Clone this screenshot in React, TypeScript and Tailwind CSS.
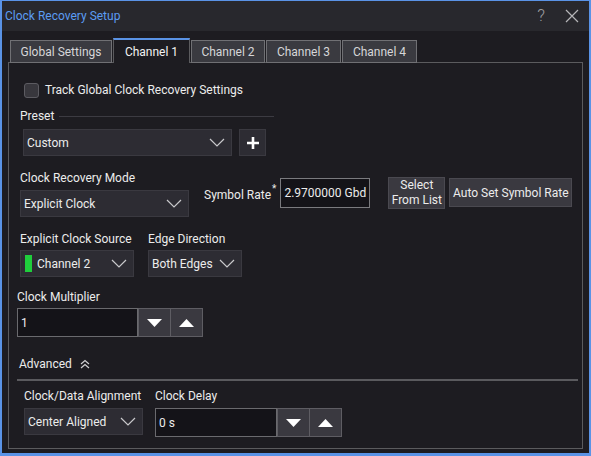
import React from "react";

const font = { fontFamily: "Roboto, 'Noto Sans', sans-serif" };

function Chevron() {
  return (
    <svg width="16" height="9" viewBox="0 0 16 9" className="shrink-0">
      <polyline points="1,1 8,8 15,1" fill="none" stroke="#c9c9cc" strokeWidth="1.2" />
    </svg>
  );
}

function Triangle({ up }: { up?: boolean }) {
  return (
    <svg width="15" height="8" viewBox="0 0 15 8">
      <polygon points={up ? "0,8 7.5,0 15,8" : "0,0 15,0 7.5,8"} fill="#ffffff" />
    </svg>
  );
}

function Dropdown({ label, width, green }: { label: string; width: string; green?: boolean }) {
  return (
    <div
      className={`${width} h-[27px] bg-[#2d2c33] border border-[#3a3940] flex items-center pl-[3px] pr-[6px] text-[12px] text-[#ececec] whitespace-nowrap`}
    >
      {green && <span className="w-[7px] h-[17px] bg-[#1fce3c] mr-[5px] ml-[1px]" />}
      <span className="flex-1">{label}</span>
      <Chevron />
    </div>
  );
}

function Spinner({ value, inputW }: { value: string; inputW: string }) {
  return (
    <div className="flex h-[29px]">
      <div
        className={`${inputW} border border-[#6a6a6e] bg-[#141318] flex items-center pl-[3px] text-[12px] text-[#ececec]`}
      >
        {value}
      </div>
      <div className="w-[33px] bg-[#3a3940] border border-[#5e5d63] flex items-center justify-center">
        <Triangle />
      </div>
      <div className="w-[32px] bg-[#3a3940] border border-[#5e5d63] border-l-0 flex items-center justify-center">
        <Triangle up />
      </div>
    </div>
  );
}

function Label({ children, className = "" }: { children: React.ReactNode; className?: string }) {
  return (
    <div className={`text-[12px] text-[#ececec] leading-[16px] whitespace-nowrap ${className}`}>{children}</div>
  );
}

export default function App() {
  const tabs = ["Global Settings", "Channel 1", "Channel 2", "Channel 3", "Channel 4"];
  const widths = ["w-[102px]", "w-[77px]", "w-[74px]", "w-[75px]", "w-[75px]"];

  return (
    <div
      style={font}
      className="w-[591px] h-[456px] flex flex-col bg-[#1d1c21] border-x-2 border-t border-b-[3px] border-[#5a93e6] whitespace-nowrap"
    >
      {/* Title bar */}
      <div className="h-[30px] shrink-0 bg-[#28282d] flex items-center pl-[3px] pr-[10px]">
        <span className="text-[12px] text-[#5b9cf2] flex-1">Clock Recovery Setup</span>
        <span className="text-[17px] text-[#9c9ca0] font-light mr-[20px]">?</span>
        <svg width="14" height="14" viewBox="0 0 14 14">
          <path d="M1 1 L13 13 M13 1 L1 13" stroke="#b5b5b8" strokeWidth="1.2" />
        </svg>
      </div>

      {/* Body */}
      <div className="flex-1 flex flex-col px-[6px] pt-[7px] pb-[4px]">
        {/* Tabs */}
        <div className="flex items-end pl-[2px] h-[25px] gap-[1px] relative z-10 -mb-[1px]">
          {tabs.map((t, i) =>
            i === 1 ? (
              <div
                key={t}
                className={`${widths[i]} h-[25px] bg-[#1d1c21] border-x border-[#5b5b5e] border-t-2 border-t-[#5a93e6] flex items-center justify-center text-[12px] text-[#f2f2f2]`}
              >
                {t}
              </div>
            ) : (
              <div
                key={t}
                className={`${widths[i]} h-[23px] bg-[#3a3a40] border border-[#707074] flex items-center justify-center text-[12px] text-[#d6d6d8]`}
              >
                {t}
              </div>
            )
          )}
        </div>

        {/* Panel */}
        <div className="flex-1 border border-[#5b5b5e] flex flex-col pl-[11px] pr-[4px]">
          {/* Track checkbox */}
          <div className="flex items-center mt-[18px] ml-[4px]">
            <div className="w-[15px] h-[15px] rounded-[3px] bg-[#38373d] border border-[#5c5b61]" />
            <span className="ml-[6px] text-[12px] text-[#ececec]">Track Global Clock Recovery Settings</span>
          </div>

          {/* Preset */}
          <div className="flex items-center mt-[9px] w-[254px]">
            <Label>Preset</Label>
            <div className="flex-1 h-px bg-[#3c3b42] ml-[5px]" />
          </div>
          <div className="flex mt-[5px] ml-[3px] gap-[7px]">
            <Dropdown label="Custom" width="w-[209px]" />
            <div className="w-[27px] h-[27px] bg-[#2d2c33] border border-[#3a3940] flex items-center justify-center">
              <svg width="14" height="14" viewBox="0 0 14 14">
                <path d="M7 1 V13 M1 7 H13" stroke="#ffffff" strokeWidth="2.6" />
              </svg>
            </div>
          </div>

          {/* Clock recovery mode row */}
          <div className="flex mt-[14px]">
            <div className="flex flex-col">
              <Label>Clock Recovery Mode</Label>
              <div className="mt-[4px]">
                <Dropdown label="Explicit Clock" width="w-[169px]" />
              </div>
            </div>
            <div className="flex items-start ml-[15px] mt-[8px]">
              <div className="text-[12px] text-[#ececec] mt-[8px] flex">
                Symbol Rate<span className="text-[10px] -mt-[5px] ml-[1px]">*</span>
              </div>
              <div className="ml-[4px] w-[90px] h-[30px] border border-[#7a7a7e] bg-[#141318] flex items-center justify-center text-[12px] text-[#ececec]">
                2.9700000 Gbd
              </div>
              <div className="ml-[18px] -mt-[1px] w-[57px] h-[32px] bg-[#3a3940] border border-[#4a4950] flex flex-col items-center justify-center text-[12px] leading-[15px] text-[#ececec]">
                <span>Select</span>
                <span>From List</span>
              </div>
              <div className="ml-[4px] w-[123px] h-[29px] bg-[#3a3940] border border-[#4a4950] flex items-center justify-center text-[12px] text-[#ececec]">
                Auto Set Symbol Rate
              </div>
            </div>
          </div>

          {/* Explicit clock source row */}
          <div className="flex mt-[14px]">
            <div className="flex flex-col">
              <Label>Explicit Clock Source</Label>
              <div className="mt-[3px]">
                <Dropdown label="Channel 2" width="w-[114px]" green />
              </div>
            </div>
            <div className="flex flex-col ml-[14px]">
              <Label>Edge Direction</Label>
              <div className="mt-[3px]">
                <Dropdown label="Both Edges" width="w-[94px]" />
              </div>
            </div>
          </div>

          {/* Clock multiplier */}
          <div className="flex flex-col mt-[12px] -ml-[3px]">
            <Label>Clock Multiplier</Label>
            <div className="mt-[3px]">
              <Spinner value="1" inputW="w-[121px]" />
            </div>
          </div>

          {/* Advanced */}
          <div className="flex items-center mt-[19px] ml-[-1px]">
            <Label>Advanced</Label>
            <svg width="12" height="10" viewBox="0 0 12 10" className="ml-[7px]">
              <polyline points="2,5 6,1.5 10,5" fill="none" stroke="#d0d0d2" strokeWidth="1.2" />
              <polyline points="2,9 6,5.5 10,9" fill="none" stroke="#d0d0d2" strokeWidth="1.2" />
            </svg>
          </div>
          <div className="h-[2px] bg-[#5a5a5e] mt-[7px] -ml-[3px]" />

          {/* Clock/data alignment row */}
          <div className="flex mt-[7px] ml-[4px]">
            <div className="flex flex-col">
              <Label>Clock/Data Alignment</Label>
              <div className="mt-[4px]">
                <Dropdown label="Center Aligned" width="w-[119px]" />
              </div>
            </div>
            <div className="flex flex-col ml-[12px]">
              <Label>Clock Delay</Label>
              <div className="mt-[4px]">
                <Spinner value="0 s" inputW="w-[122px]" />
              </div>
            </div>
          </div>
        </div>
      </div>
    </div>
  );
}
